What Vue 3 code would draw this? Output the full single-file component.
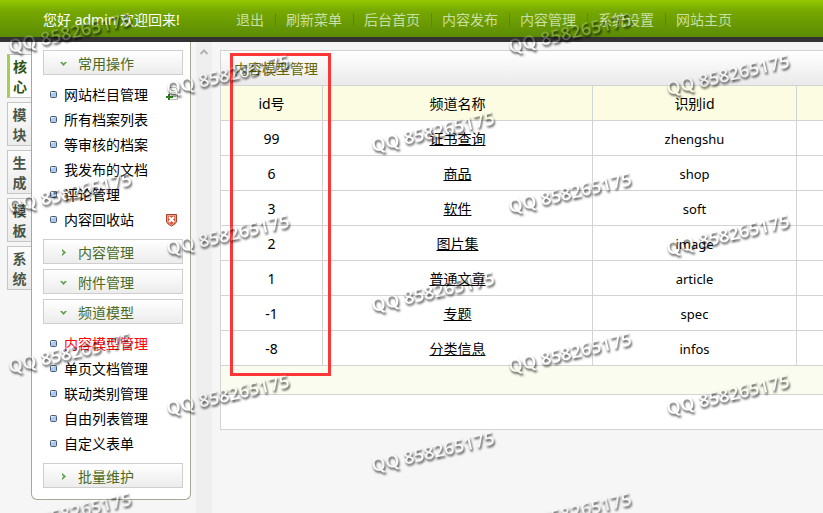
<script setup>
import { ref } from 'vue'

const navLinks = ['退出', '刷新菜单', '后台首页', '内容发布', '内容管理', '系统设置', '网站主页']
const tabs = ['核心', '模块', '生成', '模板', '系统']
const activeTab = ref('核心')

const groups = ref([
  {
    title: '常用操作',
    open: true,
    items: [
      { name: '网站栏目管理', icon: 'add' },
      { name: '所有档案列表' },
      { name: '等审核的档案' },
      { name: '我发布的文档' },
      { name: '评论管理' },
      { name: '内容回收站', icon: 'shield' }
    ]
  },
  { title: '内容管理', open: false, items: [] },
  { title: '附件管理', open: true, items: [] },
  {
    title: '频道模型',
    open: true,
    items: [
      { name: '内容模型管理', current: true },
      { name: '单页文档管理' },
      { name: '联动类别管理' },
      { name: '自由列表管理' },
      { name: '自定义表单' }
    ]
  },
  { title: '批量维护', open: false, items: [] }
])

const models = [
  { id: '99', name: '证书查询', key: 'zhengshu' },
  { id: '6', name: '商品', key: 'shop' },
  { id: '3', name: '软件', key: 'soft' },
  { id: '2', name: '图片集', key: 'image' },
  { id: '1', name: '普通文章', key: 'article' },
  { id: '-1', name: '专题', key: 'spec' },
  { id: '-8', name: '分类信息', key: 'infos' }
]

// Watermark columns: x of the first letter, y of the first baseline, number of marks
const markColumns = [[10, 53, 4], [168, 95, 3], [373, 152, 3], [510, 53, 4], [668, 95, 3]]
const marks = markColumns.flatMap(([x, y, count]) =>
  Array.from({ length: count }, (_, i) => ({ x, y: y + i * 160 }))
)
</script>

<template>
  <div class="page">
    <header class="topbar">
      <p class="greeting">您好 admin 欢迎回来!</p>
      <nav class="topnav">
        <a v-for="link in navLinks" :key="link" href="#">{{ link }}</a>
      </nav>
    </header>

    <div class="body">
      <aside class="sidebar">
        <div class="tabs">
          <button
            v-for="tab in tabs"
            :key="tab"
            type="button"
            class="tab"
            :class="{ active: tab === activeTab }"
            @click="activeTab = tab"
          >{{ tab }}</button>
        </div>
        <div class="panel">
          <section v-for="group in groups" :key="group.title" class="group">
            <button type="button" class="group-title" @click="group.open = !group.open">
              <svg class="arrow" width="9" height="9" viewBox="0 0 9 9">
                <path v-if="group.open" d="M1 3h2l1.500 1.500L6 3h2L4.500 7z" fill="#58a044" />
                <path v-else d="M3 1v2l1.500 1.500L3 6v2L7 4.500z" fill="#58a044" />
              </svg>
              {{ group.title }}
            </button>
            <ul v-if="group.open && group.items.length" class="items">
              <li v-for="item in group.items" :key="item.name">
                <svg class="dot" width="7" height="7" viewBox="0 0 7 7">
                  <rect x="0.500" y="0.500" width="6" height="6" rx="1" fill="#a9c9f2" stroke="#4c5a70" />
                  <path d="M1.500 3V1.500H4" fill="none" stroke="#e3effd" />
                </svg>
                <a href="#" :class="{ current: item.current }">{{ item.name }}</a>
                <svg v-if="item.icon === 'add'" class="tool" width="16" height="16" viewBox="0 0 16 16">
                  <path d="M5.500 0.500h6l2 2v10h-8z" fill="#f7faf5" stroke="#b4c0b0" />
                  <path d="M7 3.500h4M7 5.500h5M7 7.500h5M9 9.500h3" stroke="#b4c0b0" />
                  <path d="M5 7v6M2 10h7" stroke="#2f7a1c" stroke-width="2" />
                </svg>
                <svg v-if="item.icon === 'shield'" class="tool" width="16" height="16" viewBox="0 0 16 16">
                  <path d="M2.500 2.500h10v6.500c0 2-2 3.500-5 5-3-1.500-5-3-5-5z" fill="#d9583c" stroke="#a8402c" />
                  <path d="M3.500 3.500h8v5.500c0 1.500-1.500 2.500-4 4-2.500-1.500-4-2.500-4-4z" fill="none" stroke="#eda08c" />
                  <path d="M5 5l5 5M10 5l-5 5" stroke="#fff" stroke-width="2" />
                </svg>
              </li>
            </ul>
          </section>
        </div>
      </aside>

      <div class="scroller">
        <svg width="10" height="8" viewBox="0 0 10 8">
          <path d="M1.500 6L5 2.500 8.500 6" fill="none" stroke="#b4b4b4" stroke-width="2" />
        </svg>
      </div>

      <main class="content">
        <table class="models">
          <colgroup>
            <col class="col-id" />
            <col />
            <col class="col-key" />
            <col class="col-more" />
          </colgroup>
          <caption>内容模型管理</caption>
          <thead>
            <tr>
              <th>id号</th>
              <th>频道名称</th>
              <th>识别id</th>
              <th></th>
            </tr>
          </thead>
          <tbody>
            <tr v-for="model in models" :key="model.id">
              <td>{{ model.id }}</td>
              <td><a href="#">{{ model.name }}</a></td>
              <td class="key">{{ model.key }}</td>
              <td></td>
            </tr>
          </tbody>
          <tfoot>
            <tr class="strip"><td colspan="4"></td></tr>
            <tr><td colspan="4"></td></tr>
          </tfoot>
        </table>
        <div class="highlight"></div>
      </main>
    </div>

    <svg class="marks" aria-hidden="true">
      <defs>
        <filter id="emboss" x="0" y="0" width="100%" height="100%" color-interpolation-filters="sRGB">
          <feOffset in="SourceAlpha" dx="1" dy="2" result="low" />
          <feGaussianBlur in="low" stdDeviation="0.800" result="soft" />
          <feFlood flood-color="#000" flood-opacity="0.700" />
          <feComposite in2="soft" operator="in" />
          <feComposite in2="SourceAlpha" operator="out" result="shade" />
          <feFlood flood-color="#fff" flood-opacity="0.200" />
          <feComposite in2="SourceAlpha" operator="in" result="face" />
          <feMerge>
            <feMergeNode in="face" />
            <feMergeNode in="shade" />
          </feMerge>
        </filter>
      </defs>
      <g filter="url(#emboss)">
        <rect width="100%" height="100%" fill="none" />
        <text
          v-for="mark in marks"
          :key="`${mark.x}-${mark.y}`"
          :transform="`translate(${mark.x} ${mark.y}) rotate(-13)`"
        >QQ 858265175</text>
      </g>
    </svg>
  </div>
</template>

<style>
body {
  margin: 0;
  background: #f6f6f6;
}
</style>

<style scoped>
.page {
  position: relative;
  display: flex;
  flex-direction: column;
  height: 100vh;
  overflow: hidden;
  font-family: "Noto Sans", "Noto Sans CJK SC", sans-serif;
  font-size: 14px;
  line-height: 20px;
  color: #000;
}

a {
  color: inherit;
}

button {
  font: inherit;
  cursor: pointer;
}

.topbar {
  display: flex;
  flex: none;
  align-items: center;
  box-sizing: border-box;
  height: 42px;
  padding: 3px 0 0 43px;
  border-bottom: 5px solid #333;
  background: linear-gradient(#93c800, #76a800 30%, #5b8b05);
}

.greeting {
  width: 183px;
  margin: 0;
  color: #fff;
  white-space: nowrap;
}

.topnav {
  display: flex;
  white-space: nowrap;
}

.topnav a {
  height: 14px;
  padding: 0 11px 0 10px;
  border-right: 1px solid #5a8a04;
  line-height: 14px;
  color: #c9dfa6;
  text-decoration: none;
}

.topnav a:last-child {
  border-right: 0;
}

.body {
  display: flex;
  flex: 1;
  min-height: 0;
}

.sidebar {
  display: flex;
  flex: none;
  align-items: flex-start;
  width: 191px;
}

.tabs {
  display: flex;
  flex-direction: column;
  gap: 4px;
  width: 24px;
  padding: 12px 0 0 7px;
}

.tab {
  box-sizing: border-box;
  width: 24px;
  height: 44px;
  padding: 2px 4px 0;
  border: 1px solid #c6c6c6;
  border-right: 0;
  background: linear-gradient(#fcfcfc, #ebebeb);
  font-weight: bold;
  color: #4a5648;
}

.tab.active {
  padding: 2px 3px 0 2px;
  border-left: 3px solid #a3cf52;
  background: #fff;
  color: #2f5312;
}

.panel {
  display: flex;
  flex: 1;
  flex-direction: column;
  padding: 8px 7px 11px 11px;
  border: 1px solid #a5a995;
  border-top: 0;
  border-radius: 0 0 6px 6px;
  background: #fff;
}

.group + .group {
  margin-top: 5px;
}

.group:has(.items) + .group {
  margin-top: 0;
}

.group-title {
  display: flex;
  align-items: center;
  gap: 10px;
  box-sizing: border-box;
  width: 100%;
  height: 25px;
  padding: 2px 0 0 15px;
  border: 1px solid #cfcfcf;
  background: linear-gradient(#fff, #ececec);
  color: #4b6a22;
}

.items {
  margin: 0;
  padding: 7px 0;
  list-style: none;
}

.items li {
  display: flex;
  align-items: center;
  height: 25px;
  padding: 0 3px 0 7px;
}

.items a {
  flex: 1;
  padding-left: 7px;
  text-decoration: none;
}

.items a.current {
  color: #f00;
}

.scroller {
  flex: none;
  box-sizing: border-box;
  width: 16px;
  margin-left: 5px;
  padding: 5px 3px;
  background: #efefef;
  line-height: 8px;
}

.content {
  position: relative;
  flex: 1;
  min-width: 0;
  padding: 8px 0 0 8px;
}

.models {
  width: 100%;
  table-layout: fixed;
  border-spacing: 0;
  border-left: 1px solid #d3d3d3;
  background: #fff;
}

.col-id {
  width: 102px;
}

.col-key {
  width: 204px;
}

.col-more {
  width: 26px;
}

.models caption {
  height: 34px;
  padding-left: 13px;
  border: 1px solid #d3d3d3;
  border-right: 0;
  background: linear-gradient(#fff, #eaeaea);
  line-height: 36px;
  text-align: left;
  color: #666600;
}

.models th,
.models td {
  box-sizing: border-box;
  height: 35px;
  padding: 2px 0 0;
  border-right: 1px solid #d3d3d3;
  border-bottom: 1px solid #d3d3d3;
  font-weight: normal;
  text-align: center;
}

.models th {
  background: #fbfce2;
}

.models .key {
  font-size: 13px;
}

.models tr > :last-child {
  border-right: 0;
}

.models .strip td {
  height: 29px;
  background: #f9fcef;
}

.highlight {
  position: absolute;
  top: 11px;
  left: 18px;
  box-sizing: border-box;
  width: 101px;
  height: 323px;
  border: 3px solid #fb3636;
}

.marks {
  position: absolute;
  inset: 0;
  width: 100%;
  height: 100%;
  pointer-events: none;
  font-size: 18px;
  font-weight: 600;
}
</style>
